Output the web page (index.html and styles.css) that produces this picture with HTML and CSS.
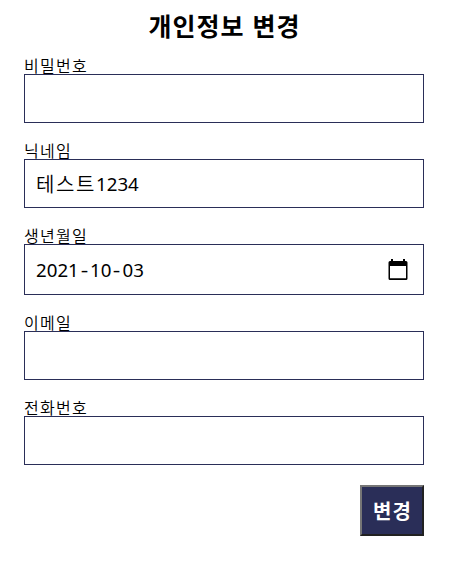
FILE: index.html
```html
<!DOCTYPE html>
<html lang="ko">
<head>
<meta charset="utf-8">
<title>개인정보 변경</title>
<link rel="stylesheet" href="styles.css">
</head>
<body>
<form class="profile">
  <h1 class="title">개인정보 변경</h1>
  <div class="field"><div class="label">비밀번호</div><div class="input"></div></div>
  <div class="field"><div class="label">닉네임</div><div class="input"><span class="hangul">테스트</span><span>1234</span></div></div>
  <div class="field"><div class="label">생년월일</div><div class="input date"><span>2021<span class="dash">-</span>10<span class="dash">-</span>03</span>
    <svg class="calendar" width="20" height="22" viewBox="0 0 20 22"><path fill="#000" fill-rule="evenodd" d="M3 0h2v2h10V0h2v2h1a1.500 1.500 0 0 1 1.500 1.500v16a1.500 1.500 0 0 1-1.500 1.500h-16a1.500 1.500 0 0 1-1.500-1.500v-16a1.500 1.500 0 0 1 1.500-1.500h1zM2 7v12.300h16V7z"/></svg>
  </div></div>
  <div class="field"><div class="label">이메일</div><div class="input"></div></div>
  <div class="field"><div class="label">전화번호</div><div class="input"></div></div>
  <button class="submit" type="button">변경</button>
</form>
</body>
</html>
```
FILE: styles.css
```css
* { box-sizing: border-box; }
body {
  margin: 0;
  background: #fff;
  color: #000;
  font-family: "Noto Sans", "Noto Sans CJK KR", sans-serif;
}
.profile {
  display: flex;
  flex-direction: column;
  width: 400px;
  margin-left: 24px;
  padding-top: 7px;
}
.title {
  margin: 0 0 13px;
  height: 36px;
  line-height: 36px;
  text-align: center;
  text-indent: 1px;
  font-family: "Noto Sans CJK KR", sans-serif;
  font-size: 25px;
  font-weight: 700;
  letter-spacing: 1px;
  white-space: nowrap;
}
.field { margin-bottom: 18px; }
.label {
  height: 18px;
  line-height: 18px;
  font-family: "Noto Sans CJK KR", sans-serif;
  font-size: 16px;
  font-weight: 350;
  letter-spacing: 1.3px;
}
.input {
  display: flex;
  align-items: center;
  height: 49px;
  padding: 0 11px;
  border: 1px solid #2a2e58;
  font-size: 18.7px;
  line-height: 26px;
}
.hangul {
  font-family: "Noto Sans CJK KR", sans-serif;
  font-size: 20px;
  font-weight: 350;
  letter-spacing: 1.6px;
}
.date {
  justify-content: space-between;
  height: 51px;
  padding-right: 15px;
}
.dash {
  display: inline-block;
  padding: 0 2.600px;
  transform: scaleX(1.25);
}
.calendar { display: block; margin-top: 1px; }
.submit {
  align-self: flex-end;
  width: 64px;
  height: 51px;
  margin-top: 2px;
  padding: 0 0 1px 1px;
  border: 2px solid;
  border-color: #767676 #212121 #212121 #767676;
  background: #2a2e58;
  color: #fff;
  font-family: "Noto Sans CJK KR", sans-serif;
  font-size: 20px;
  font-weight: 700;
  letter-spacing: 1px;
}
```
